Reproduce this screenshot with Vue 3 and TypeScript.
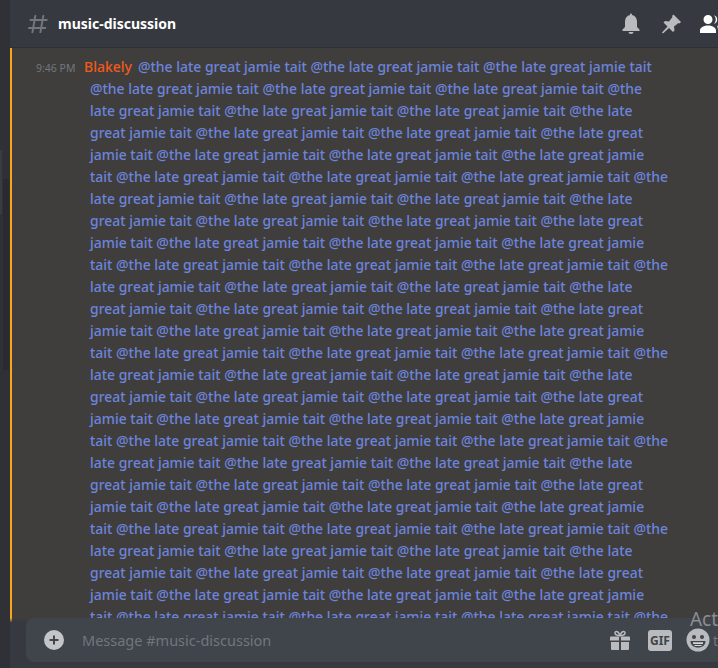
<template>
  <div class="page">
    <aside class="rail">
      <div class="rail-tab" />
      <div class="rail-thumb" />
    </aside>
    <main class="channel">
      <header class="topbar">
        <svg class="hash" width="24" height="24" viewBox="0 0 24 24">
          <path fill="currentColor" fill-rule="evenodd" d="M5.887 21a.5.5 0 0 1-.493-.587L6 17H2.595a.5.5 0 0 1-.492-.586l.175-1A.5.5 0 0 1 2.77 15H6.35l1.06-6H4.005a.5.5 0 0 1-.492-.586l.175-1A.5.5 0 0 1 4.18 7h3.58l.637-3.587A.5.5 0 0 1 8.89 3h.99a.5.5 0 0 1 .492.587L9.76 7h6l.637-3.587A.5.5 0 0 1 16.89 3h.99a.5.5 0 0 1 .492.587L17.76 7h3.405a.5.5 0 0 1 .492.586l-.175 1a.5.5 0 0 1-.492.414H17.41l-1.06 6h3.405a.5.5 0 0 1 .492.586l-.175 1a.5.5 0 0 1-.492.414H16l-.637 3.587a.5.5 0 0 1-.492.413h-.99a.5.5 0 0 1-.492-.587L14 17H8l-.637 3.587a.5.5 0 0 1-.492.413h-.984ZM9.41 9l-1.06 6h6l1.06-6h-6Z" />
        </svg>
        <span class="channel-name">music-discussion</span>
        <div class="toolbar">
          <svg width="24" height="24" viewBox="0 0 24 24">
            <path fill="currentColor" d="M18 9.500V15l2.500 2.500V19h-17v-1.500L6 15V9.500C6 6.200 7.900 3.600 11 3V2.500a1 1 0 0 1 2 0V3c3.100.6 5 3.200 5 6.500Z" />
            <path fill="currentColor" d="M9.500 20h5a2.500 2 0 0 1-5 0Z" />
          </svg>
          <svg width="24" height="24" viewBox="0 0 24 24">
            <path fill="currentColor" d="M14.500 2.500 22 10l-1.500 1.500-1-.5-4.500 3.500.5 4L14 20l-4-4-6 5.500-1-1 5.500-6-4-4 1.500-1.500 4 .5L13.500 5l-.5-1Z" />
          </svg>
          <svg width="26" height="24" viewBox="0 0 26 24">
            <path fill="currentColor" d="M9 12a4.500 4.500 0 1 0 0-9 4.500 4.500 0 0 0 0 9Zm0 1.500c-3.500 0-8 1.700-8 5V21h16v-2.500c0-3.300-4.500-5-8-5Z" />
            <path fill="currentColor" d="M15 3.200a4.500 4.500 0 0 1 0 8.600 6 6 0 0 0 0-8.600Zm3 10.500c2.700.5 6 2 6 4.800V21h-5v-2.500c0-2-.4-3.500-1-4.800Z" />
          </svg>
        </div>
      </header>
      <section class="feed">
        <p class="message">
          <span class="stamp">9:46 PM</span><span class="author">Blakely</span>
          <span class="mention">{{ mentions }}</span>
        </p>
      </section>
      <div class="composer">
        <span class="watermark">Act</span>
        <div class="inputbox">
          <span class="plus">
            <svg width="20" height="20" viewBox="0 0 20 20">
              <circle cx="10" cy="10" r="10" fill="currentColor" />
              <path d="M10 5.500v9M5.500 10h9" stroke="#40444b" stroke-width="2" />
            </svg>
          </span>
          <span class="placeholder">Message #music-discussion</span>
          <div class="tools">
            <svg width="20" height="20" viewBox="0 0 20 20">
              <path fill="currentColor" d="M1 6.500h8v4H0v-3a1 1 0 0 1 1-1Zm10 0h8a1 1 0 0 1 1 1v3h-9v-4ZM1 12h8v8H2a1 1 0 0 1-1-1v-7Zm10 0h8v7a1 1 0 0 1-1 1h-7v-8Z" />
              <path fill="none" stroke="currentColor" stroke-width="1.500" d="M10 5.500C8 5.500 5 5 5 3s3-3 5 2.500C12 0 15 1 15 3s-3 2.500-5 2.500Z" />
            </svg>
            <span class="gif">GIF</span>
            <svg class="emoji" width="24" height="24" viewBox="0 0 24 24">
              <circle cx="12" cy="12" r="11.500" fill="currentColor" />
              <circle cx="8" cy="9" r="2" fill="#40444b" />
              <circle cx="16" cy="9" r="2" fill="#40444b" />
              <path fill="#40444b" d="M4.500 13h15c0 4-3 6.500-7.500 6.500S4.500 17 4.500 13Z" />
              <path fill="#d4d6d9" d="M7 14.300h10v1.600H7Zm1.500 2.700h7v1h-7Z" />
            </svg>
            <span class="watermark-tail">t</span>
          </div>
        </div>
      </div>
    </main>
  </div>
</template>

<script setup lang="ts">
const phrase = '@the late great jamie tait'
const mentions = Array.from({ length: 104 }, () => phrase).join(' ')
</script>

<style>
html,
body {
  margin: 0;
  overflow: hidden;
}
</style>

<style scoped>
.page {
  display: flex;
  width: 718px;
  height: 668px;
  overflow: hidden;
  background: #36393f;
  font-family: "Noto Sans", "Open Sans", sans-serif;
}

.rail {
  position: relative;
  flex: none;
  width: 10px;
  padding-top: 179px;
  box-sizing: border-box;
  background: #2f3136;
}

.rail-tab {
  position: absolute;
  left: 0;
  top: 150px;
  width: 2px;
  height: 64px;
  background: #3a3c43;
}

.rail-thumb {
  width: 6px;
  height: 191px;
  margin-left: 3px;
  background: #2a2b2f;
}

.channel {
  position: relative;
  flex: 1;
  min-width: 0;
  display: flex;
  flex-direction: column;
}

.topbar {
  flex: none;
  display: flex;
  align-items: center;
  height: 48px;
  padding-left: 16px;
  box-sizing: border-box;
  background: #36393f;
  border-bottom: 1px solid #2e3035;
  color: #72767d;
}

.channel-name {
  margin-left: 8px;
  color: #fff;
  font-size: 14px;
  font-weight: 700;
}

.toolbar {
  display: flex;
  align-items: center;
  gap: 16px;
  margin-left: auto;
  margin-right: -7px;
  color: #b9bbbe;
}

.toolbar svg:last-child {
  color: #fff;
}

.feed {
  flex: 1;
  min-height: 0;
  overflow: hidden;
  margin-bottom: 46px;
}

.message {
  margin: 0;
  padding: 8px 48px 0 78px;
  min-height: 100%;
  box-sizing: border-box;
  background: #3f3e3c;
  border-left: 2px solid #faa61a;
  text-indent: -54px;
  line-height: 22px;
  font-size: 13.950px;
}

.stamp {
  display: inline-block;
  width: 48px;
  line-height: 14px;
  text-indent: 0;
  color: #72767d;
  font-size: 10.500px;
}

.author {
  margin-right: 6px;
  color: #f15a1c;
  font-size: 14px;
  font-weight: 500;
}

.mention {
  color: #6d84dc;
  font-weight: 500;
}

.composer {
  position: absolute;
  left: 0;
  right: 0;
  bottom: 0;
  height: 50px;
  padding-left: 16px;
  box-sizing: border-box;
  background: linear-gradient(to bottom, transparent 0, #36393f 5px);
}

.watermark {
  position: absolute;
  right: 0;
  top: -12px;
  z-index: 1;
  color: #8a8d91;
  font-size: 19px;
}

.inputbox {
  display: flex;
  align-items: center;
  height: 44px;
  padding-left: 18px;
  background: #40444b;
  border-radius: 8px 0 0 8px;
  color: #b9bbbe;
}

.plus {
  display: flex;
  color: #c3c5c9;
}

.placeholder {
  margin-left: 18px;
  color: #72767d;
  font-size: 14.500px;
}

.tools {
  display: flex;
  align-items: center;
  gap: 18px;
  margin-left: auto;
  color: #b9bbbe;
}

.emoji {
  margin-left: -4px;
}

.gif {
  width: 24px;
  text-align: center;
  line-height: 21px;
  border-radius: 3px;
  background: #b9bbbe;
  color: #40444b;
  font-size: 12px;
  font-weight: 700;
}

.watermark-tail {
  margin-left: -15px;
  color: #72767d;
  font-size: 14px;
}
</style>
